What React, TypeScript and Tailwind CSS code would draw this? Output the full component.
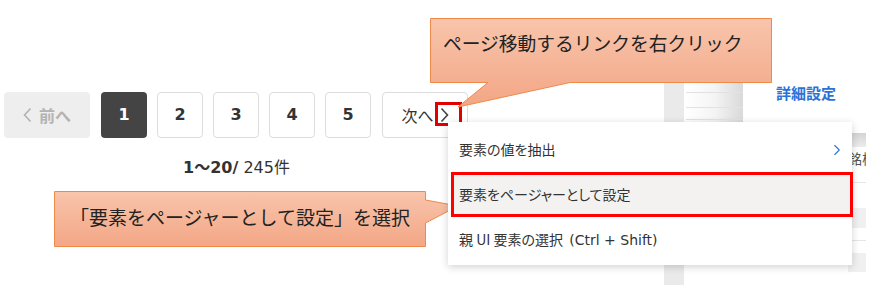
import React from "react";
import { ChevronRight } from "lucide-react";

const jp = { fontFamily: '"Noto Sans CJK JP", "Noto Sans", sans-serif' };
const latin = { fontFamily: '"DejaVu Sans", "Noto Sans CJK JP", sans-serif' };

const Chevron = ({ dir, className }: { dir: "left" | "right"; className?: string }) => (
  <svg width="9" height="16" viewBox="0 0 9 16" className={className}>
    <path
      d={dir === "left" ? "M7.5 1.5 L1.5 8 L7.5 14.5" : "M1.5 1.5 L7.5 8 L1.5 14.5"}
      fill="none"
      stroke="currentColor"
      strokeWidth="1.6"
    />
  </svg>
);

const Pager = () => (
  <div className="pl-[4px] pt-[92px] w-[664px]">
    <div className="flex items-center">
      <div className="w-[86px] h-[46px] rounded bg-[#eeeeee] flex items-center justify-center gap-[7px] text-[#b3b3b3]">
        <Chevron dir="left" />
        <span className="text-[16px] font-bold">前へ</span>
      </div>
      <div
        className="ml-[11px] w-[46px] h-[46px] rounded bg-[#444444] text-white flex items-center justify-center text-[16px] font-bold"
        style={latin}
      >
        1
      </div>
      {["2", "3", "4", "5"].map((n) => (
        <div
          key={n}
          className="ml-[10px] w-[46px] h-[46px] rounded border border-[#dddddd] bg-white text-[#333333] flex items-center justify-center text-[16px] font-bold"
          style={latin}
        >
          {n}
        </div>
      ))}
      <div className="ml-[11px] w-[86px] h-[46px] rounded border border-[#dddddd] bg-white flex items-center justify-center gap-[6px] text-[#333333]">
        <span className="text-[16px]">次へ</span>
        <Chevron dir="right" className="text-[#444444]" />
      </div>
    </div>
    <div
      className="w-[465px] text-center mt-[20px] text-[16px] text-[#333333] leading-[20px]"
      style={latin}
    >
      <span className="font-bold">1〜20/</span> 245件
    </div>
  </div>
);

const SidePanel = () => (
  <div className="flex items-start pt-[83px]">
    <div className="w-[20px] h-[202px] bg-[#eaeaea]" />
    <div className="ml-[2px] w-[57px] h-[40px] flex flex-col bg-gradient-to-r from-white via-[#f4f4f4] to-[#d9d9d9]">
      <div className="h-[9px]" />
      <div className="h-px bg-[#e2e2e2]" />
      <div className="h-[14px]" />
      <div className="h-px bg-[#e2e2e2]" />
      <div className="h-[11px]" />
      <div className="h-px bg-[#e2e2e2]" />
    </div>
    <div className="ml-[33px] text-[15px] font-bold text-[#2a72d8] leading-[20px] whitespace-nowrap">
      詳細設定
    </div>
    <div className="ml-[12px] mt-[50px] w-[18px] overflow-hidden flex flex-col">
      <div className="h-[14px] bg-gradient-to-b from-[#d4d4d4] to-[#ececec]" />
      <div className="h-[22px] text-[14px] leading-[22px] text-[#555555] whitespace-nowrap">銘柄</div>
      <div className="h-[13px]" />
      <div className="h-px bg-[#e6e6e6]" />
      <div className="h-[25px]" />
      <div className="h-[20px] bg-[#f0f0f0]" />
      <div className="h-[12px]" />
      <div className="h-px bg-[#e6e6e6]" />
      <div className="h-[12px]" />
      <div className="h-[19px] bg-[#f0f0f0]" />
    </div>
  </div>
);

const Callouts = () => (
  <svg className="absolute left-0 top-0 pointer-events-none" width="886" height="285">
    <defs>
      <linearGradient id="cg1" gradientUnits="userSpaceOnUse" x1="0" y1="18" x2="0" y2="107">
        <stop offset="0" stopColor="#f8c5ac" />
        <stop offset="1" stopColor="#f3a685" />
      </linearGradient>
      <linearGradient id="cg2" gradientUnits="userSpaceOnUse" x1="0" y1="191" x2="0" y2="247">
        <stop offset="0" stopColor="#f8c5ac" />
        <stop offset="1" stopColor="#f3a685" />
      </linearGradient>
    </defs>
    <path
      d="M430.5 18.5 H771.5 V82.5 H570 L458 107 L488 82.5 H430.5 Z"
      fill="url(#cg1)"
      stroke="#ee8a4a"
      strokeWidth="1"
    />
    <path
      d="M54.5 191.5 H425.5 V200 L458 206 L425.5 223 V246.5 H54.5 Z"
      fill="url(#cg2)"
      stroke="#ee8a4a"
      strokeWidth="1"
    />
  </svg>
);

const Menu = () => (
  <div className="absolute left-[448px] top-[122px] w-[404px] h-[143px] bg-white shadow-[0_2px_8px_rgba(0,0,0,0.18)] pt-[5px] text-[14px] text-[#333333] [font-feature-settings:'palt']">
    <div className="h-[45px] flex items-center justify-between pl-[11px] pr-[6px]">
      <span>要素の値を抽出</span>
      <ChevronRight className="w-[18px] h-[18px] text-[#2b79d8]" strokeWidth={1.5} />
    </div>
    <div className="h-[45px] ml-[3px] -mr-[1px] border-[3px] border-[#ff0000] bg-[#f3f2f1] flex items-center pl-[5px]">
      <span>要素をページャーとして設定</span>
    </div>
    <div className="h-[45px] flex items-center pl-[11px]">
      <span>
        親 UI 要素の選択&nbsp;&nbsp;<span style={latin}>(Ctrl + Shift)</span>
      </span>
    </div>
  </div>
);

export default function App() {
  return (
    <div className="relative w-[886px] h-[285px] bg-white overflow-hidden" style={jp}>
      <div className="flex">
        <Pager />
        <SidePanel />
      </div>

      {/* red highlight around the next arrow */}
      <div className="absolute left-[435px] top-[102px] w-[27px] h-[24px] border-[3px] border-[#e00000]" />

      <Callouts />
      <div className="absolute left-[443px] top-[29px] text-[18.75px] leading-[28px] text-[#222222] whitespace-nowrap">
        ページ移動するリンクを右クリック
      </div>
      <div className="absolute left-[55px] top-[204px] w-[370px] text-center text-[19px] leading-[26px] text-[#222222] whitespace-nowrap">
        「要素をページャーとして設定」を選択
      </div>

      <Menu />
    </div>
  );
}
